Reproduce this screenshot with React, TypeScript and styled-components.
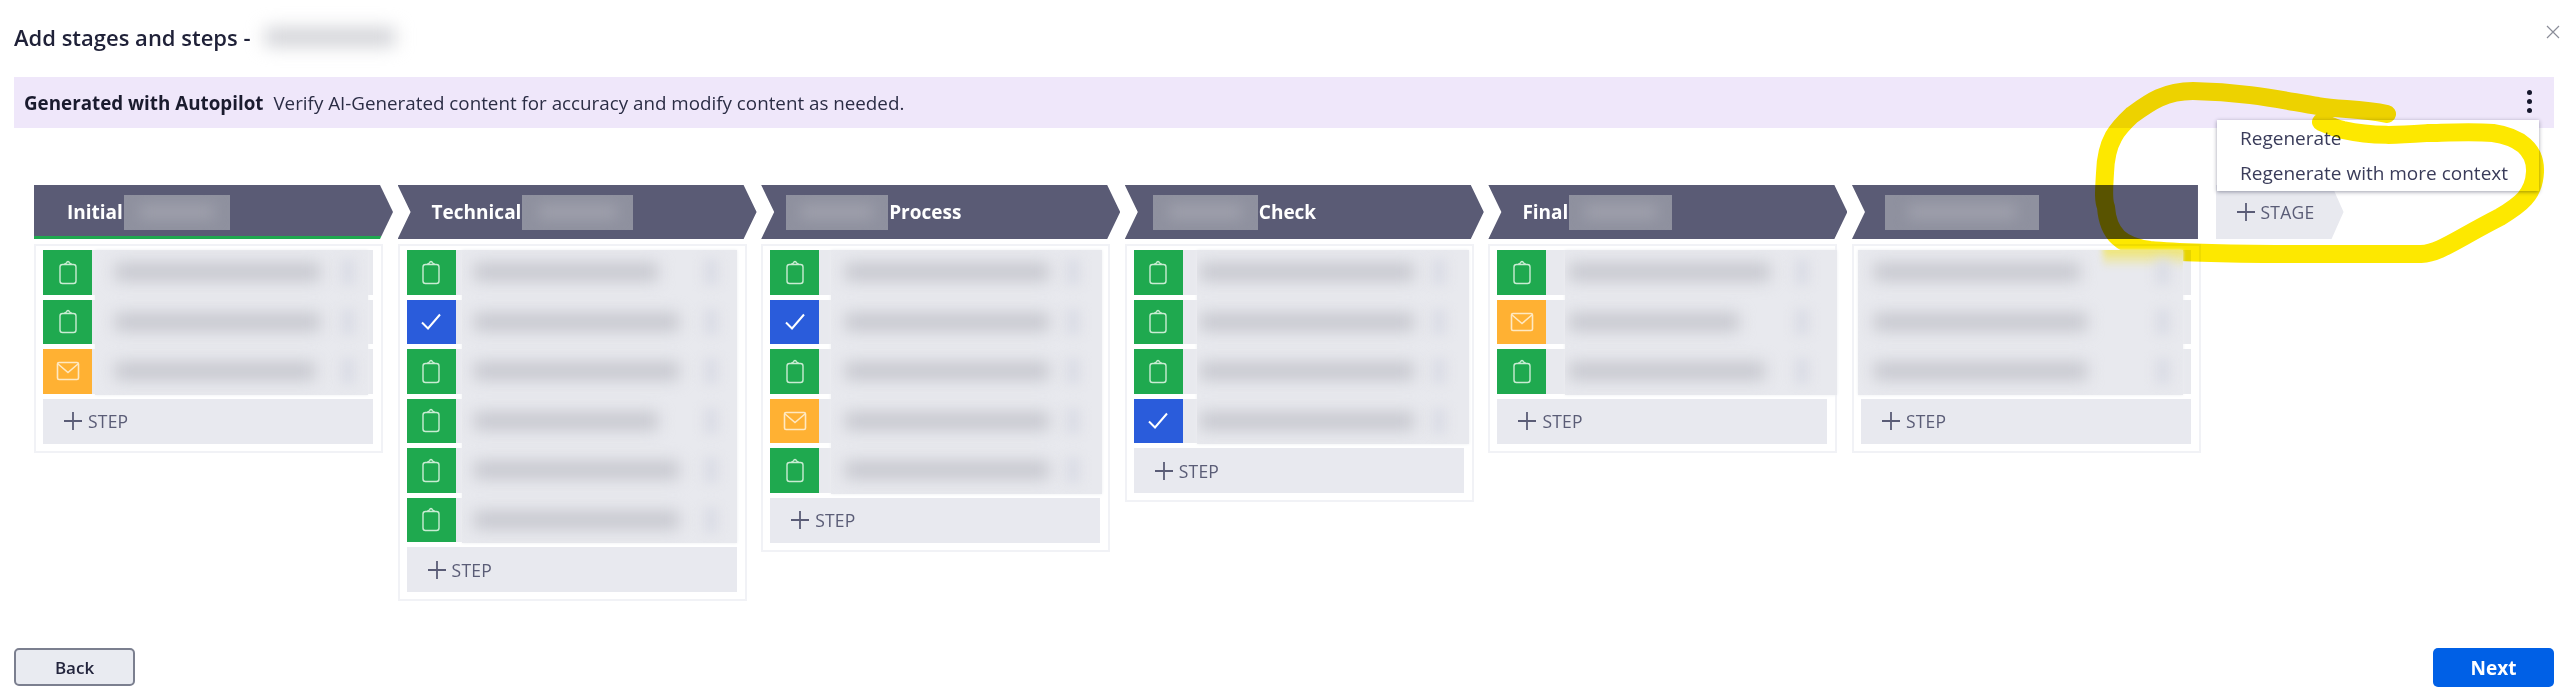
import React from "react";
import styled, { createGlobalStyle } from "styled-components";

const Global = createGlobalStyle`
  html, body { margin: 0; padding: 0; background: #fff; }
  body { font-family: "Open Sans", "Liberation Sans", sans-serif; overflow: hidden; }
`;

const Page = styled.div`
  position: relative;
  width: 2560px;
  height: 698px;
  box-sizing: border-box;
  padding: 0 6px 11px 14px;
  display: flex;
  flex-direction: column;
  color: #23253d;
`;

const TitleRow = styled.header`
  height: 77px;
  display: flex;
  align-items: center;
  justify-content: space-between;
  box-sizing: border-box;
  padding-bottom: 3px;
`;

const TitleGroup = styled.div`
  display: flex;
  align-items: center;
  gap: 14px;
`;

const Title = styled.h1`
  margin: 0;
  font-size: 22px;
  font-weight: 600;
  color: #1f2138;
`;

const TitleBlur = styled.div`
  width: 130px;
  height: 18px;
  background: #cfd0d5;
  filter: blur(9px);
`;

const CloseButton = styled.button`
  border: 0;
  background: none;
  padding: 0;
  width: 14px;
  height: 14px;
  margin-right: -6px;
  margin-top: -10px;
  color: #8b8d99;
  display: flex;
`;

const Banner = styled.div`
  position: relative;
  height: 51px;
  background: #efe7fa;
  display: flex;
  align-items: center;
  justify-content: space-between;
  padding: 0 22px 0 10px;
  font-size: 18.8px;
  color: #2b2d45;
`;

const BannerLabel = styled.strong`
  font-weight: 700;
  color: #1a1b2e;
  margin-right: 10px;
`;

const Dots = styled.div`
  display: flex;
  flex-direction: column;
  gap: 4px;
  margin-top: -2px;
`;

const Dot = styled.span`
  width: 5px;
  height: 5px;
  border-radius: 50%;
  background: #14162b;
`;

const Menu = styled.div`
  position: absolute;
  top: 43px;
  right: 15px;
  width: 322px;
  height: 71px;
  box-sizing: border-box;
  background: #fff;
  box-shadow: 0 1px 4px rgba(40, 42, 70, 0.45);
  padding: 0 0 0 23px;
  display: flex;
  flex-direction: column;
  justify-content: space-around;
  z-index: 1;
`;

const MenuItem = styled.div`
  font-size: 19px;
  color: #3a3c5a;
`;

const Board = styled.div`
  margin: 57px 0 0 20px;
  display: flex;
  align-items: flex-start;
`;

const StageColumn = styled.section`
  flex: 0 0 363.6px;
  width: 363.6px;
`;

const StageHeader = styled.div<{ $first?: boolean; $last?: boolean; $done?: boolean; $pad: number }>`
  width: ${(p) => (p.$last ? "346px" : "359px")};
  height: 54px;
  box-sizing: border-box;
  padding-left: ${(p) => p.$pad}px;
  display: flex;
  align-items: center;
  gap: 1px;
  color: #fff;
  font-size: 19px;
  font-weight: 700;
  background: ${(p) =>
    p.$done ? "linear-gradient(to top, #1fa94f 3px, #5a5b75 3px)" : "#5a5b75"};
  clip-path: polygon(
    0 0,
    ${(p) => (p.$last ? "100% 0, 100% 100%" : "calc(100% - 13px) 0, 100% 50%, calc(100% - 13px) 100%")},
    0 100%
    ${(p) => (p.$first ? "" : ", 13px 50%")}
  );
`;

const HeaderBlur = styled.div<{ $w: number }>`
  width: ${(p) => p.$w}px;
  height: 35px;
  flex: none;
  background: #8f919f;
  overflow: hidden;
  display: flex;
  align-items: center;
  justify-content: center;
`;

const HeaderBlurInner = styled.div`
  width: 70%;
  height: 14px;
  background: #a0a1ad;
  filter: blur(7px);
`;

const Card = styled.div`
  margin-top: 5px;
  width: 349px;
  box-sizing: border-box;
  border: 2px solid #f1f2f6;
  padding: 4px 8px 7px 7px;
`;

const StepList = styled.div`
  position: relative;
  display: flex;
  flex-direction: column;
  gap: 5px;
`;

const StepRow = styled.div`
  height: 44.5px;
  display: flex;
  background: #e8e9ee;
`;

const StepIcon = styled.div<{ $kind: "form" | "mail" | "check" }>`
  flex: 0 0 49px;
  display: flex;
  align-items: center;
  justify-content: center;
  background: ${(p) =>
    p.$kind === "form" ? "#1fa94f" : p.$kind === "mail" ? "#ffb133" : "#2a5cdb"};
`;

const BlurPanel = styled.div<{ $left: number; $right: number; $glow?: boolean }>`
  position: absolute;
  top: 0;
  bottom: -1px;
  left: ${(p) => p.$left}px;
  right: ${(p) => p.$right}px;
  background: #e8e9ee;
  box-shadow: 0 0 3px #eceef2;
  display: flex;
  flex-direction: column;
  gap: 5px;
  z-index: 3;
  overflow: hidden;
  ${(p) =>
    p.$glow
      ? `&::before {
    content: "";
    position: absolute;
    top: -4px;
    right: -4px;
    width: 84px;
    height: 22px;
    background: linear-gradient(to bottom, rgba(245, 228, 40, 0.75), rgba(245, 228, 40, 0));
    filter: blur(3px);
  }`
      : ""}
`;

const BlurRow = styled.div<{ $pad: number; $tail: number }>`
  height: 44.5px;
  display: flex;
  align-items: center;
  justify-content: space-between;
  padding: 0 ${(p) => p.$tail}px 0 ${(p) => p.$pad}px;
`;

const BlurText = styled.div<{ $w: number }>`
  width: ${(p) => p.$w}px;
  height: 18px;
  background: #c6c7ce;
  filter: blur(8px);
`;

const BlurMark = styled.div`
  width: 14px;
  height: 26px;
  background: #dadce5;
  filter: blur(6px);
`;

const AddStep = styled.div`
  margin-top: 5px;
  height: 45px;
  background: #e8e9ef;
  display: flex;
  align-items: center;
  gap: 6px;
  padding-left: 21px;
  font-size: 17.5px;
  color: #5a5c76;
  letter-spacing: 0.2px;
`;

const AddStage = styled.div`
  flex: none;
  width: 128px;
  height: 54px;
  box-sizing: border-box;
  padding-left: 21px;
  background: #e8e9ef;
  clip-path: polygon(0 0, calc(100% - 12px) 0, 100% 50%, calc(100% - 12px) 100%, 0 100%);
  display: flex;
  align-items: center;
  gap: 6px;
  font-size: 17.5px;
  color: #5a5c76;
  letter-spacing: 0.2px;
`;

const Footer = styled.footer`
  margin-top: auto;
  display: flex;
  justify-content: space-between;
`;

const BackButton = styled.button`
  width: 121px;
  height: 38px;
  box-sizing: border-box;
  background: #e9ebf1;
  border: 2px solid #7b7f8f;
  border-radius: 5px;
  font: 600 17px "Open Sans", sans-serif;
  color: #23253d;
`;

const NextButton = styled.button`
  width: 121px;
  height: 39px;
  background: #0060e6;
  border: 0;
  border-radius: 5px;
  font: 700 19px "Open Sans", sans-serif;
  color: #fff;
`;

const Scribble = styled.svg`
  position: absolute;
  left: 0;
  top: 0;
  pointer-events: none;
  mix-blend-mode: multiply;
  z-index: 2;
`;

const ClipboardIcon = () => (
  <svg width="20" height="25" viewBox="0 0 20 25" fill="none" stroke="#c9ecd3" strokeWidth="1.400">
    <rect x="2" y="4.500" width="16" height="19" rx="2.500" />
    <path d="M6.500 4.500c.2-1.200 1.400-1.300 2-1.500.3-1 .8-1.500 1.500-1.500s1.200.5 1.500 1.500c.6.200 1.800.3 2 1.500" />
  </svg>
);

const MailIcon = () => (
  <svg width="24" height="20" viewBox="0 0 24 20" fill="none" stroke="#ffe9c2" strokeWidth="1.600">
    <rect x="1.500" y="1.500" width="21" height="17" rx="1.500" />
    <path d="M1.500 2.500 12 11.500 22.500 2.500" />
  </svg>
);

const CheckIcon = () => (
  <svg width="22" height="18" viewBox="0 0 22 18" fill="none" stroke="#fff" strokeWidth="2">
    <path d="M2 9.500 8 15.500 20 1.500" />
  </svg>
);

const PlusIcon = () => (
  <svg width="18" height="18" viewBox="0 0 18 18" stroke="#5a5c76" strokeWidth="1.800">
    <path d="M9 0v18M0 9h18" />
  </svg>
);

type Kind = "form" | "mail" | "check";

interface Stage {
  before?: string;
  after?: string;
  headPad: number;
  blur: number;
  steps: Kind[];
  bars: number[];
  panelLeft: number;
  panelRight: number;
  pad: number;
  tail: number;
}

const stages: Stage[] = [
  {
    before: "Initial",
    headPad: 33,
    blur: 106,
    steps: ["form", "form", "mail"],
    bars: [205, 205, 200],
    panelLeft: 52,
    panelRight: 5,
    pad: 20,
    tail: 13,
  },
  {
    before: "Technical",
    headPad: 34,
    blur: 111,
    steps: ["form", "check", "form", "form", "form", "form"],
    bars: [184, 205, 205, 184, 205, 205],
    panelLeft: 55,
    panelRight: 0,
    pad: 12,
    tail: 19,
  },
  {
    after: "Process",
    headPad: 25,
    blur: 102,
    steps: ["form", "check", "form", "mail", "form"],
    bars: [204, 204, 204, 204, 204],
    panelLeft: 61,
    panelRight: -2,
    pad: 14,
    tail: 22,
  },
  {
    after: "Check",
    headPad: 28,
    blur: 105,
    steps: ["form", "form", "form", "check"],
    bars: [214, 214, 214, 214],
    panelLeft: 63,
    panelRight: -5,
    pad: 3,
    tail: 23,
  },
  {
    before: "Final",
    headPad: 34,
    blur: 103,
    steps: ["form", "mail", "form"],
    bars: [201, 170, 196],
    panelLeft: 68,
    panelRight: -10,
    pad: 4,
    tail: 28,
  },
  {
    headPad: 33,
    blur: 154,
    steps: ["form", "form", "form"],
    bars: [206, 213, 213],
    panelLeft: -3,
    panelRight: 8,
    pad: 16,
    tail: 13,
  },
];

const icons = { form: ClipboardIcon, mail: MailIcon, check: CheckIcon };

export default function App() {
  return (
    <Page>
      <Global />
      <TitleRow>
        <TitleGroup>
          <Title>Add stages and steps -</Title>
          <TitleBlur />
        </TitleGroup>
        <CloseButton aria-label="Close">
          <svg width="14" height="14" viewBox="0 0 14 14" stroke="currentColor" strokeWidth="1.200">
            <path d="M1 1l12 12M13 1 1 13" />
          </svg>
        </CloseButton>
      </TitleRow>

      <Banner>
        <div>
          <BannerLabel>Generated with Autopilot</BannerLabel>
          Verify AI-Generated content for accuracy and modify content as needed.
        </div>
        <Dots>
          <Dot />
          <Dot />
          <Dot />
        </Dots>
        <Menu>
          <MenuItem>Regenerate</MenuItem>
          <MenuItem>Regenerate with more context</MenuItem>
        </Menu>
      </Banner>

      <Board>
        {stages.map((s, i) => (
          <StageColumn key={i}>
            <StageHeader $first={i === 0} $done={i === 0} $last={i === stages.length - 1} $pad={s.headPad}>
              {s.before}
              <HeaderBlur $w={s.blur}>
                <HeaderBlurInner />
              </HeaderBlur>
              {s.after}
            </StageHeader>
            <Card>
              <StepList>
                {s.steps.map((k, j) => {
                  const Icon = icons[k];
                  return (
                    <StepRow key={j}>
                      <StepIcon $kind={k}>
                        <Icon />
                      </StepIcon>
                    </StepRow>
                  );
                })}
                <BlurPanel $left={s.panelLeft} $right={s.panelRight} $glow={i === stages.length - 1}>
                  {s.bars.map((w, j) => (
                    <BlurRow key={j} $pad={s.pad} $tail={s.tail}>
                      <BlurText $w={w} />
                      <BlurMark />
                    </BlurRow>
                  ))}
                </BlurPanel>
              </StepList>
              <AddStep>
                <PlusIcon />
                STEP
              </AddStep>
            </Card>
          </StageColumn>
        ))}
        <AddStage>
          <PlusIcon />
          STAGE
        </AddStage>
      </Board>

      <Footer>
        <BackButton>Back</BackButton>
        <NextButton>Next</NextButton>
      </Footer>

      <Scribble width="2560" height="698" viewBox="0 0 2560 698" fill="none">
        <path
          d="M2387 114 C2360 108 2340 110 2318 106 C2290 102 2250 92 2193 91 C2165 91 2150 102 2132 115 C2118 128 2106 140 2105 173 C2104 190 2103 200 2106 207 C2108 235 2122 246 2150 250 C2200 255 2300 254 2357 254 L2421 254 C2440 253 2455 240 2500 217 C2520 205 2534 195 2535 172 C2536 150 2520 137 2493 133 C2470 131 2440 133 2428 133 C2400 135 2375 137 2343 130 C2335 128 2328 125 2321 122"
          stroke="#fde800"
          strokeWidth="18"
          strokeLinecap="round"
          strokeLinejoin="round"
        />
      </Scribble>
    </Page>
  );
}
